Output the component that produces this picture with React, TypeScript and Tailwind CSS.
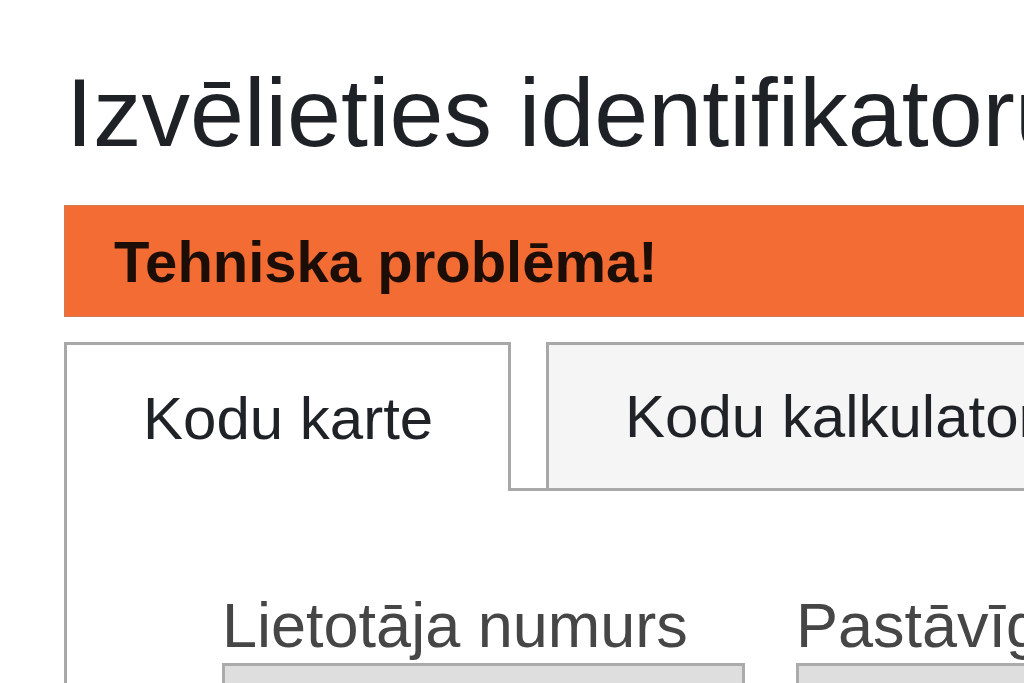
import React from 'react';

const fields = ['Lietotāja numurs', 'Pastāvīgā parole'];

export default function App() {
  return (
    <div className="w-[1024px] h-[683px] overflow-hidden bg-white font-['Liberation_Sans',Arial,sans-serif]">
      <div className="w-[1500px] pl-[64px] pt-[57px]">
        {/* Virsraksts */}
        <h1 className="pl-[2px] text-[97px] leading-[111px] font-normal text-[#1e2226] whitespace-nowrap">
          Izvēlieties identifikatoru
        </h1>

        {/* Kļūdas paziņojums */}
        <div className="mt-[37px] h-[112px] bg-[#f26c34] border border-[#cf7a55] pl-[49px] pt-[23px]">
          <p className="text-[58px] leading-[65px] font-bold text-[#1c0e06] whitespace-nowrap">
            Tehniska problēma!
          </p>
        </div>

        {/* Cilnes */}
        <div className="mt-[25px] flex">
          <div className="w-[447px] h-[149px] bg-white border-t-[3px] border-l-[3px] border-r-[3px] border-[#a8a8a8] flex items-center pl-[76px]">
            <span className="text-[60px] leading-[69px] text-[#1f2226] whitespace-nowrap">Kodu karte</span>
          </div>
          <div className="w-[35px] h-[149px] border-b-[3px] border-[#a8a8a8]" />
          <div className="w-[600px] h-[149px] bg-[#f5f5f5] border-[3px] border-[#a8a8a8] flex items-center pl-[76px]">
            <span className="text-[60px] leading-[69px] text-[#1f2226] whitespace-nowrap">Kodu kalkulators</span>
          </div>
          <div className="flex-1 h-[149px] border-b-[3px] border-[#a8a8a8]" />
        </div>

        {/* Pieteikšanās forma */}
        <div className="border-l-[3px] border-[#a8a8a8] h-[300px] pl-[155px] pt-[98px] flex gap-[51px]">
          {fields.map(label => (
            <div key={label} className="w-[523px] flex flex-col gap-[2px]">
              <label className="text-[63px] leading-[72px] text-[#464646] whitespace-nowrap">{label}</label>
              <div className="h-[70px] bg-[#dedede] border-t-[3px] border-l-[3px] border-r-[3px] border-[#ababab]" />
            </div>
          ))}
        </div>
      </div>
    </div>
  );
}
